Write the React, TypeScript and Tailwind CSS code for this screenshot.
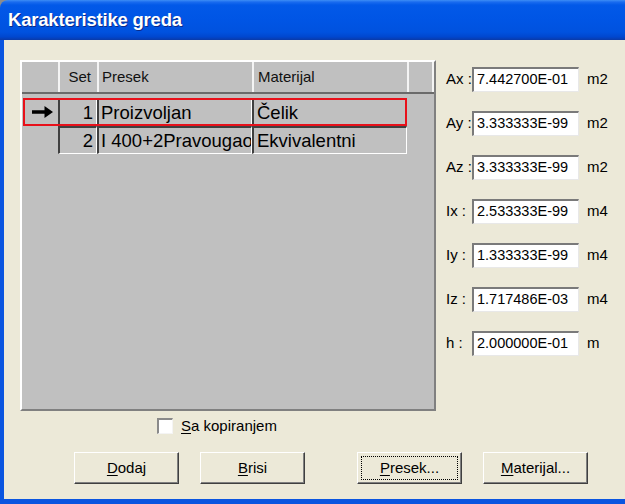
export default function App() {
  const fields = [
    ["Ax :", "7.442700E-01", "m2"],
    ["Ay :", "3.333333E-99", "m2"],
    ["Az :", "3.333333E-99", "m2"],
    ["Ix :", "2.533333E-99", "m4"],
    ["Iy :", "1.333333E-99", "m4"],
    ["Iz :", "1.717486E-03", "m4"],
    ["h :", "2.000000E-01", "m"],
  ];
  const rows = [
    { set: "1", presek: "Proizvoljan", mat: "Čelik", sel: true },
    { set: "2", presek: "I 400+2Pravougaonik", mat: "Ekvivalentni", sel: false },
  ];
  const cell =
    "h-full flex items-center overflow-hidden whitespace-nowrap border-t-2 border-l-2 border-t-[#404040] border-l-[#404040] border-b border-r border-b-white border-r-white text-[18.5px] text-black";
  const btn =
    "w-[105px] h-[32px] bg-[#ece9d8] border border-t-white border-l-white border-r-[#404040] border-b-[#404040] shadow-[inset_-1px_-1px_0_#808080] flex items-center justify-center text-[15px] text-black";
  return (
    <div className="w-[625px] h-[504px] bg-[#8c8c8c] font-['Liberation_Sans',Arial,sans-serif]">
      <div className="w-full h-full flex flex-col overflow-hidden">
        <div className="h-[40px] shrink-0 rounded-tl-[8px] bg-[linear-gradient(to_bottom,#3d8ef5_0px,#1a6cef_2px,#0259e8_5px,#0055e5_50%,#0052df_80%,#0047cf_92%,#0a3aa8_100%)] flex items-center pl-[8px]">
          <span className="text-white font-bold text-[18.5px] tracking-[-0.2px] [text-shadow:1px_1px_0_#0a2a8a]">
            Karakteristike greda
          </span>
        </div>
        <div className="flex-1 flex flex-col bg-[#0a55e0] pl-[4px] pb-[5px]">
          <div className="flex-1 flex flex-col bg-[#ece9d8] pt-[20px] pl-[16px]">
            <div className="flex">
              {/* Grid */}
              <div className="w-[416px] h-[351px] bg-[#c0c0c0] border-t-2 border-l-2 border-t-white border-l-white border-r-2 border-b-2 border-r-[#808080] border-b-[#808080] flex flex-col">
                <div className="h-[32px] shrink-0 flex border-b-2 border-b-[#6a6a6a] text-[15px] text-[#111]">
                  <div className="w-[36px]" />
                  <div className="w-[39px] border-l-2 border-l-[#f4f4f4] flex items-center justify-end pr-[6px]">Set</div>
                  <div className="w-[155px] border-l-2 border-l-[#f4f4f4] flex items-center pl-[3px]">Presek</div>
                  <div className="w-[155px] border-l-2 border-l-[#f4f4f4] flex items-center pl-[4px]">Materijal</div>
                  <div className="flex-1 border-l-2 border-l-[#f4f4f4] border-r-2 border-r-[#f4f4f4]" />
                </div>
                <div className="flex flex-col pt-[4px] pl-[1px]">
                  {rows.map((r) => (
                    <div key={r.set} className="relative flex w-[384px] h-[28px]">
                      <div className="w-[35px] h-full flex items-center pl-[9px]">
                        {r.sel && (
                          <svg width="21" height="12" viewBox="0 0 21 12">
                            <path d="M0 4.3 H12.5 V0 L21 6 L12.5 12 V7.7 H0 Z" fill="#000" />
                          </svg>
                        )}
                      </div>
                      <div className={`${cell} w-[39px] justify-end pr-[3px]`}>{r.set}</div>
                      <div className={`${cell} w-[155px] pl-[2px]`}>{r.presek}</div>
                      <div className={`${cell} w-[155px] pl-[3px]`}>{r.mat}</div>
                      {r.sel && (
                        <div className="absolute inset-0 border-2 border-[#e8101a] pointer-events-none" />
                      )}
                    </div>
                  ))}
                </div>
              </div>
              {/* Right fields */}
              <div className="ml-[9px] pt-[7px] flex flex-col gap-[19px]">
                {fields.map(([l, v, u]) => (
                  <div key={l} className="flex items-center h-[25px] text-[15px] text-black">
                    <span className="w-[27px] pl-[1px]">{l}</span>
                    <div className="w-[107px] h-[25px] bg-white border-t-2 border-l-2 border-t-[#7a7a7a] border-l-[#7a7a7a] border-b border-r border-b-[#e8e8e8] border-r-[#e8e8e8] flex items-center pl-[3px] text-[14.5px]">
                      {v}
                    </div>
                    <span className="ml-[8px]">{u}</span>
                  </div>
                ))}
              </div>
            </div>
            {/* Checkbox */}
            <div className="mt-[7px] h-[16px] flex items-center pl-[137px]">
              <div className="w-[16px] h-[16px] bg-white border-t-2 border-l-2 border-t-[#8a8a8a] border-l-[#8a8a8a] border-b border-r border-b-[#f4f4f4] border-r-[#f4f4f4]" />
              <span className="ml-[8px] text-[15px] text-black">
                <span className="underline underline-offset-2">S</span>a kopiranjem
              </span>
            </div>
            {/* Buttons */}
            <div className="mt-[18px] flex pl-[54px]">
              <div className={btn}>
                <span>
                  <span className="underline underline-offset-2">D</span>odaj
                </span>
              </div>
              <div className={`${btn} ml-[21px]`}>
                <span>
                  <span className="underline underline-offset-2">B</span>risi
                </span>
              </div>
              <div className={`${btn} ml-[52px] p-[3px]`}>
                <div className="w-full h-full border border-dotted border-black flex items-center justify-center">
                  <span>
                    <span className="underline underline-offset-2">P</span>resek...
                  </span>
                </div>
              </div>
              <div className={`${btn} ml-[21px]`}>
                <span>
                  <span className="underline underline-offset-2">M</span>aterijal...
                </span>
              </div>
            </div>
          </div>
        </div>
      </div>
    </div>
  );
}
